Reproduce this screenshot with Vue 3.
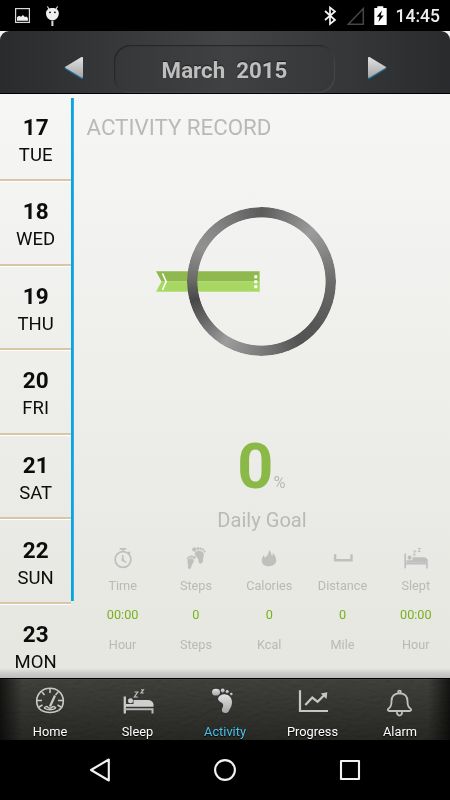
<template>
  <div class="phone">
    <!-- Android status bar -->
    <div class="status">
      <svg class="st-left" width="64" height="31" viewBox="0 0 64 31">
        <rect x="15.6" y="8.6" width="13.8" height="13.8" fill="none" stroke="#d8d8d8" stroke-width="1.2" />
        <path d="M17 20.800v-3.500l2-1.600 2 1 1.900-1.800 2 2.200 1.400-.6 1.600 1.500v2.800z" fill="#eee" />
        <path d="M46 12.800C46.300 9.800 48.700 8 52.400 8s6.100 1.800 6.400 4.800c.2 4.200-2.700 7.700-6.400 7.700s-6.600-3.500-6.400-7.700z" fill="#eee" />
        <path d="M49 9l-1.600-2.500M56 9l1.600-2.500" stroke="#eee" stroke-width="1.100" />
        <path d="M52.400 21v5" stroke="#ddd" stroke-width="2" />
        <circle cx="50" cy="12.300" r=".9" /><circle cx="54.900" cy="12.300" r=".9" />
      </svg>
      <div class="st-right">
        <svg width="66" height="31" viewBox="321 0 66 31">
          <path d="M325 11l10 9-5 4V7.500l5 4-10 8.500" fill="none" stroke="#f4f4f4" stroke-width="1.700" />
          <path d="M363.300 8.500v15.700h-15z" fill="none" stroke="#474747" stroke-width="1.500" />
          <path d="M374.300 8h3V6.300h6V8h3.400v17h-12.400z" fill="#fff" />
          <path d="M382 10.500l-5.300 6.300h3l-1.300 5.200 5.300-6.600h-3z" fill="#000" />
        </svg>
        <span class="clock">14:45</span>
      </div>
    </div>

    <!-- Month picker -->
    <div class="header-back">
      <header class="header">
        <svg class="arrow" width="24" height="28" viewBox="0 0 24 28">
          <path d="M3.500 14.800L20.500 4.500q1.500-.5 1.500 1v18.500q0 1.500-1.500 1z" fill="#1c6c9c" />
          <path d="M3.500 13.300L20.500 3q1.500-.5 1.500 1v18.500q0 1.500-1.500 1z" fill="url(#metal)" />
        </svg>
        <div class="month">March&nbsp; 2015</div>
        <svg class="arrow" width="24" height="28" viewBox="0 0 24 28">
          <path d="M20.500 14.800L3.500 4.500Q2 4 2 5.500V24q0 1.500 1.500 1z" fill="#1c6c9c" />
          <path d="M20.500 13.300L3.500 3Q2 2.500 2 4v18.500q0 1.500 1.500 1z" fill="url(#metal)" />
        </svg>
      </header>
    </div>

    <div class="content">
      <ul class="days">
        <li v-for="d in days" :key="d.num" class="day">
          <b>{{ d.num }}</b>
          <span>{{ d.name }}</span>
        </li>
      </ul>
      <div class="rail"></div>

      <main class="main">
        <h1 class="title">ACTIVITY RECORD</h1>

        <div class="dial">
          <svg class="ribbon" width="105" height="22" viewBox="0 0 105 22">
            <path d="M0 .3H103.800V10.500H5.500z" fill="#8fb84f" />
            <path d="M5.500 10.500H103.800V20.700H0z" fill="#a8d763" />
            <path d="M103.400 .3v20.100H.5" fill="none" stroke="#bfe08a" stroke-width=".8" />
            <path d="M6.500 2.500l3.600 8-3.600 8.500" fill="none" stroke="#fff" stroke-width="1.600" />
            <path d="M98.300 4.200h3v3h-3zM98.300 9.200h3v3h-3zM98.300 14.200h3v3h-3z" fill="#fff" />
          </svg>
          <div class="ring"></div>
        </div>

        <div class="score"><b>0</b><span>%</span></div>
        <div class="goal">Daily Goal</div>

        <div class="metrics">
          <div v-for="m in metrics" :key="m.label" class="metric">
            <div class="m-icon">
              <svg v-if="m.icon === 'time'" width="26" height="26" viewBox="0 0 26 26">
                <circle cx="13" cy="14.500" r="7.900" fill="none" stroke="#bfbfbd" stroke-width="1.700" />
                <path d="M9.700 3.800h6.600M13 4v3M18.500 7l1.500 1.500" stroke="#bfbfbd" stroke-width="1.800" fill="none" />
                <path d="M12.800 10v5l3.500 2.500" stroke="#bfbfbd" stroke-width="1.500" fill="none" />
                <circle cx="12.800" cy="15" r="1.400" fill="#bfbfbd" />
              </svg>
              <svg v-else-if="m.icon === 'steps'" width="26" height="26" viewBox="0 0 26 26" fill="#bfbfbd" stroke="#bfbfbd" stroke-width=".3">
                <path d="M12.400 7.300c1.800-2 6.800-2.200 8 1.300.8 2.600-.6 4-.5 5.700.2 2.200-.6 4.400-2.600 4.200-2.200-.2-1.200-3.400-2.400-5.200-.9-1.500-4.200-3.500-2.500-6z" />
                <circle cx="11.300" cy="4.500" r="2.100" /><circle cx="15" cy="3.500" r="1.300" /><circle cx="17.700" cy="3.700" r="1.100" /><circle cx="20" cy="4.600" r="1" /><circle cx="21.600" cy="6.500" r=".9" />
                <path d="M5 14.700c1.200-1.700 5-1.600 5.600.5.500 1.700-.8 2.600-1.500 4-.8 1.500-.8 4.700-2.600 4.600-2-.2-1.300-2.800-1.400-4.600-.1-1.500-1.100-3-.1-4.500z" />
                <circle cx="11.200" cy="12.400" r="1.300" /><circle cx="8.900" cy="11.600" r="1" /><circle cx="7.100" cy="11.700" r=".9" /><circle cx="5.500" cy="12.400" r=".8" /><circle cx="4.400" cy="13.600" r=".7" />
              </svg>
              <svg v-else-if="m.icon === 'fire'" width="26" height="26" viewBox="0 0 26 26">
                <path d="M13.200 5c2.300 2 1.800 4.500 3 5.800.8-.7.700-2 .5-3.200 2 2.300 3.600 5 3.500 8-.2 3.600-3.200 5.600-7.200 5.600s-7.200-1.800-7.200-5.500c0-2.500 1-4.200 2.300-5.900.2 1.500.2 2.400 1 3 1.700-2 3.900-4 4.100-7.800z" fill="#bfbfbd" />
              </svg>
              <svg v-else-if="m.icon === 'distance'" width="26" height="26" viewBox="0 0 26 26">
                <path d="M5.100 9.300v5.900h16.400V9.300" fill="none" stroke="#bfbfbd" stroke-width="2.400" />
              </svg>
              <svg v-else width="30" height="26" viewBox="0 0 30 26">
                <path d="M4.200 8.500v14.800" stroke="#bfbfbd" stroke-width="1.700" />
                <path d="M4 18.800h22v4.700" fill="none" stroke="#bfbfbd" stroke-width="1.600" />
                <path d="M5.500 15.200h21.300v2.600H5.500zM11.500 12.300h11q4 0 4.300 3.500H11.500z" fill="#bfbfbd" />
                <circle cx="8.600" cy="12.700" r="2.100" fill="#bfbfbd" />
                <path d="M12 6h3l-3 4h3M17 3.500h2.500L17 6.500h2.500" fill="none" stroke="#bfbfbd" stroke-width="1" />
              </svg>
            </div>
            <div class="m-label">{{ m.label }}</div>
            <div class="m-value">{{ m.value }}</div>
            <div class="m-unit">{{ m.unit }}</div>
          </div>
        </div>
      </main>
    </div>

    <!-- App tabs -->
    <nav class="tabs">
      <svg class="leather" width="450" height="61">
        <defs>
          <filter id="grain" x="0" y="0" width="100%" height="100%">
            <feTurbulence type="fractalNoise" baseFrequency=".13 .3" numOctaves="3" seed="4" />
            <feDiffuseLighting lighting-color="#fff" surfaceScale="1.200">
              <feDistantLight azimuth="250" elevation="50" />
            </feDiffuseLighting>
          </filter>
          <linearGradient id="metal" x1="0" y1="0" x2="0" y2="1">
            <stop offset="0" stop-color="#e2e2e2" />
            <stop offset="1" stop-color="#a6a6a6" />
          </linearGradient>
        </defs>
        <rect width="450" height="61" filter="url(#grain)" />
      </svg>
      <div v-for="t in tabs" :key="t.name" class="tab" :class="{ 'tab--active': t.name === current }" @click="current = t.name">
        <svg v-if="t.icon === 'gauge'" width="34" height="34" viewBox="0 0 34 34" fill="none" stroke="#c9c9c9">
          <path d="M8.500 27.500C4.500 25 3.600 20.500 3.700 17.500 4 10 10 5.300 17 5.300S30 10 30.300 17.500c.1 3-.8 7.500-4.800 10" stroke-width="1.600" />
          <path d="M17 6v4M9 9l2.500 3M25 9l-2.500 3M4 17.500h5M25 17.500h5M6 24l3.500-2M28 24l-3.500-2" stroke-width="1.500" />
          <path d="M22 12.500l-5 11" stroke-width="2.200" />
          <path d="M11 25c1.500-1.600 3-2 4-.7 1 1.200 3 1.200 4 0 1.200-1.300 2.600-.9 4 .7M8.500 27.500q8.500 4 17 0M11 25q6 3.500 12 0" stroke-width="1.400" />
        </svg>
        <svg v-else-if="t.icon === 'bed'" width="34" height="34" viewBox="0 0 34 34">
          <path d="M3.800 13.500v17" stroke="#c9c9c9" stroke-width="2.300" />
          <path d="M3.500 26.200h28v4.300" fill="none" stroke="#b8b8b8" stroke-width="2" />
          <path d="M4.500 21h28v2.800h-28zM12.500 17h14q5.500 0 6 4.500h-20z" fill="#cfcfcf" />
          <circle cx="9.500" cy="17.800" r="2.500" fill="#cfcfcf" />
          <path d="M13.500 9h3.300l-3.500 5h3.500M20 6.700h2.500l-2.500 3.300h2.700" fill="none" stroke="#c4c4c4" stroke-width="1.100" />
        </svg>
        <svg v-else-if="t.icon === 'foot'" width="34" height="34" viewBox="0 0 34 34" fill="url(#metal)">
          <ellipse cx="8" cy="9.200" rx="4" ry="3.400" />
          <circle cx="14.700" cy="7.500" r="1.900" /><circle cx="19.200" cy="8.600" r="1.600" /><circle cx="23.300" cy="11" r="1.300" />
          <path d="M10.300 14.700c1.500-3 5.700-4.200 9.200-2.700 4.300 1.900 5.200 6.500 4 10.500-.8 2.700-2.200 4.300-3 6-1 2.200-6.700 2.100-6.600-1.300 0-2.600 2.200-4.200.8-6.500-1.300-1.800-5.800-2.700-4.400-6z" />
        </svg>
        <svg v-else-if="t.icon === 'chart'" width="34" height="34" viewBox="0 0 34 34" fill="none" stroke="#c6c6c6">
          <path d="M4 7.300V28h28" stroke-width="2.200" />
          <path d="M9.300 22l7-7.500 5.300 4.300 7-7" stroke-width="2.300" />
          <path d="M31.300 9.300l-6.500 1.200 5.700 5.500z" fill="#c6c6c6" stroke="none" />
        </svg>
        <svg v-else width="34" height="34" viewBox="0 0 34 34" fill="none" stroke="#c0c0c0" stroke-width="1.800">
          <path d="M16.500 10.300c-5.500 0-8 3.500-8 8 0 4.500-.7 6-2.800 7.300-1.300.9-1.200 2 .2 2.400h21.200c1.400-.4 1.500-1.500.2-2.400-2.100-1.300-2.800-2.800-2.800-7.300 0-4.500-2.500-8-8-8z" />
          <circle cx="16.500" cy="9" r="1.400" />
          <path d="M14 28.500c-.6 5.300 5.600 5.300 5 0" />
        </svg>
        <span>{{ t.name }}</span>
      </div>
    </nav>

    <!-- Android navigation -->
    <div class="nav">
      <svg width="450" height="60" viewBox="0 0 450 60" fill="none" stroke="#f2f2f2" stroke-width="2.100" stroke-linejoin="round">
        <path d="M91 30L108.800 19.500v21z" />
        <circle cx="225" cy="30" r="9.900" />
        <rect x="341" y="21" width="18" height="18" />
      </svg>
    </div>
  </div>
</template>

<script setup>
import { ref } from 'vue'

const current = ref('Activity')

const days = [
  { num: 17, name: 'TUE' },
  { num: 18, name: 'WED' },
  { num: 19, name: 'THU' },
  { num: 20, name: 'FRI' },
  { num: 21, name: 'SAT' },
  { num: 22, name: 'SUN' },
  { num: 23, name: 'MON' },
]

const metrics = [
  { icon: 'time', label: 'Time', value: '00:00', unit: 'Hour' },
  { icon: 'steps', label: 'Steps', value: '0', unit: 'Steps' },
  { icon: 'fire', label: 'Calories', value: '0', unit: 'Kcal' },
  { icon: 'distance', label: 'Distance', value: '0', unit: 'Mile' },
  { icon: 'sleep', label: 'Slept', value: '00:00', unit: 'Hour' },
]

const tabs = [
  { icon: 'gauge', name: 'Home' },
  { icon: 'bed', name: 'Sleep' },
  { icon: 'foot', name: 'Activity' },
  { icon: 'chart', name: 'Progress' },
  { icon: 'bell', name: 'Alarm' },
]
</script>

<style>
body { margin: 0; background: #000; }
</style>

<style scoped>
* { box-sizing: border-box; }
.phone {
  width: 450px; height: 800px; overflow: hidden;
  display: flex; flex-direction: column;
  background: #000;
  font-family: Roboto, "Liberation Sans", sans-serif;
}
svg { display: block; flex: none; }

.status { height: 31px; flex: none; display: flex; justify-content: space-between; }
.st-right { display: flex; width: 129px; }
.clock {
  width: 55px; margin-left: 8.5px;
  font-size: 17.5px; line-height: 33px; font-weight: 500; color: #eee;
}

.header-back { height: 63px; flex: none; background: #f2f2f2; }
.header {
  height: 63px; display: flex; align-items: center; justify-content: center;
  border-radius: 9px 9px 0 0; border-bottom: 1px solid #000;
  background: linear-gradient(90deg, #292b2d, #434446 50%, #292b2d);
}
.arrow { margin-top: 12px; }
.month {
  width: 221px; height: 48px; margin: 13px 30.5px 0 29.5px;
  border-radius: 16px;
  background: linear-gradient(90deg, #353739, #404143 50%, #353739);
  box-shadow: inset 1px 1px 1px #242527, inset -1px -1px 1px #47484a;
  font-size: 22.3px; line-height: 51px; font-weight: 700; text-align: center;
  color: #bfbfbf; text-shadow: 0 -1px 1px #1c1c1c;
}

.content {
  height: 584px; flex: none; display: flex; overflow: hidden;
  background:
    linear-gradient(#e2e3de, #d0d0ce 35%, #bcbcbb) 0 100% / 100% 9px no-repeat,
    linear-gradient(#f6f6f5, #e6e7e1 95%);
}
.days { list-style: none; margin: 0; padding: 2.5px 0 0; width: 71.3px; flex: none; }
.day {
  height: 84.6px; padding-top: 16.1px;
  display: flex; flex-direction: column; align-items: center;
  border-bottom: 2px solid #d8c6a6; box-shadow: 0 1px 0 #fff;
  color: #0c0c0c;
}
.day b { font-size: 22.5px; line-height: 28px; }
.day span { font-size: 18.5px; line-height: 28px; }
.rail { width: 2.7px; height: 503px; margin-top: 4px; flex: none; background: linear-gradient(90deg, #0ba4e2 75%, #7cc8e6); }

.main { flex: 1; min-width: 0; color: #b9b9b8; }
.title { margin: 0; padding-left: 12.5px; font-size: 22.3px; line-height: 66px; font-weight: 400; }

.dial { height: 242px; display: grid; grid-template-columns: 376px; align-items: center; }
.dial > * { grid-area: 1 / 1; }
.ribbon { margin-left: 82px; margin-top: 1px; }
.ring {
  width: 149px; height: 149px; margin-left: 113.3px; margin-top: 1px;
  border-radius: 50%;
  background: conic-gradient(
    #565656, #999 45deg, #666 90deg, #505050 130deg, #4e4e4e 148deg, #777 180deg,
    #9a9a9a 211deg, #646464 235deg, #424242 255deg, #6a6a6a 272deg, #8e8e8e 300deg, #7c7c7c 325deg, #565656
  );
  -webkit-mask: radial-gradient(circle, transparent 63.7px, #000 64.500px);
  mask: radial-gradient(circle, transparent 63.7px, #000 64.500px);
  opacity: .96;
}

.score { height: 64px; margin-top: 33px; padding-left: 163.3px; display: flex; }
.score b { font-size: 63px; line-height: 64px; color: #8bb948; }
.score span { font-size: 16.5px; line-height: 96px; }
.goal { width: 376px; height: 42px; font-size: 20.1px; line-height: 43px; text-align: center; }

.metrics { margin-left: 12px; display: grid; grid-template-columns: repeat(5, 73.3px); }
.metric { text-align: center; font-size: 12.7px; }
.m-icon { height: 34px; display: flex; align-items: center; justify-content: center; }
.m-label { line-height: 21px; }
.m-value { line-height: 38px; color: #78b01e; }
.m-unit { line-height: 22px; }

.tabs {
  position: relative; height: 62px; flex: none; padding: 0 6.25px;
  display: grid; grid-template-columns: repeat(5, 87.5px);
  background: linear-gradient(#363632, #1f1f1c);
  border-top: 1px solid #000; box-shadow: inset 0 1px 0 #4a4a47;
}
.leather { position: absolute; left: 0; top: 1px; mix-blend-mode: soft-light; opacity: .18; }
.tabs::after {
  content: ""; position: absolute; inset: 0;
  background: linear-gradient(90deg, #000a, #0000 22px, #0000 428px, #000a);
}
.tab {
  position: relative; z-index: 1;
  display: flex; flex-direction: column; align-items: center;
  font-size: 12.8px; color: #fff; text-shadow: 0 1px 1px #000;
}
.tab svg { margin-top: 4px; }
.tab span { line-height: 30.5px; }
.tab--active { color: #4cc3ef; }

.nav { height: 60px; flex: none; }
</style>
